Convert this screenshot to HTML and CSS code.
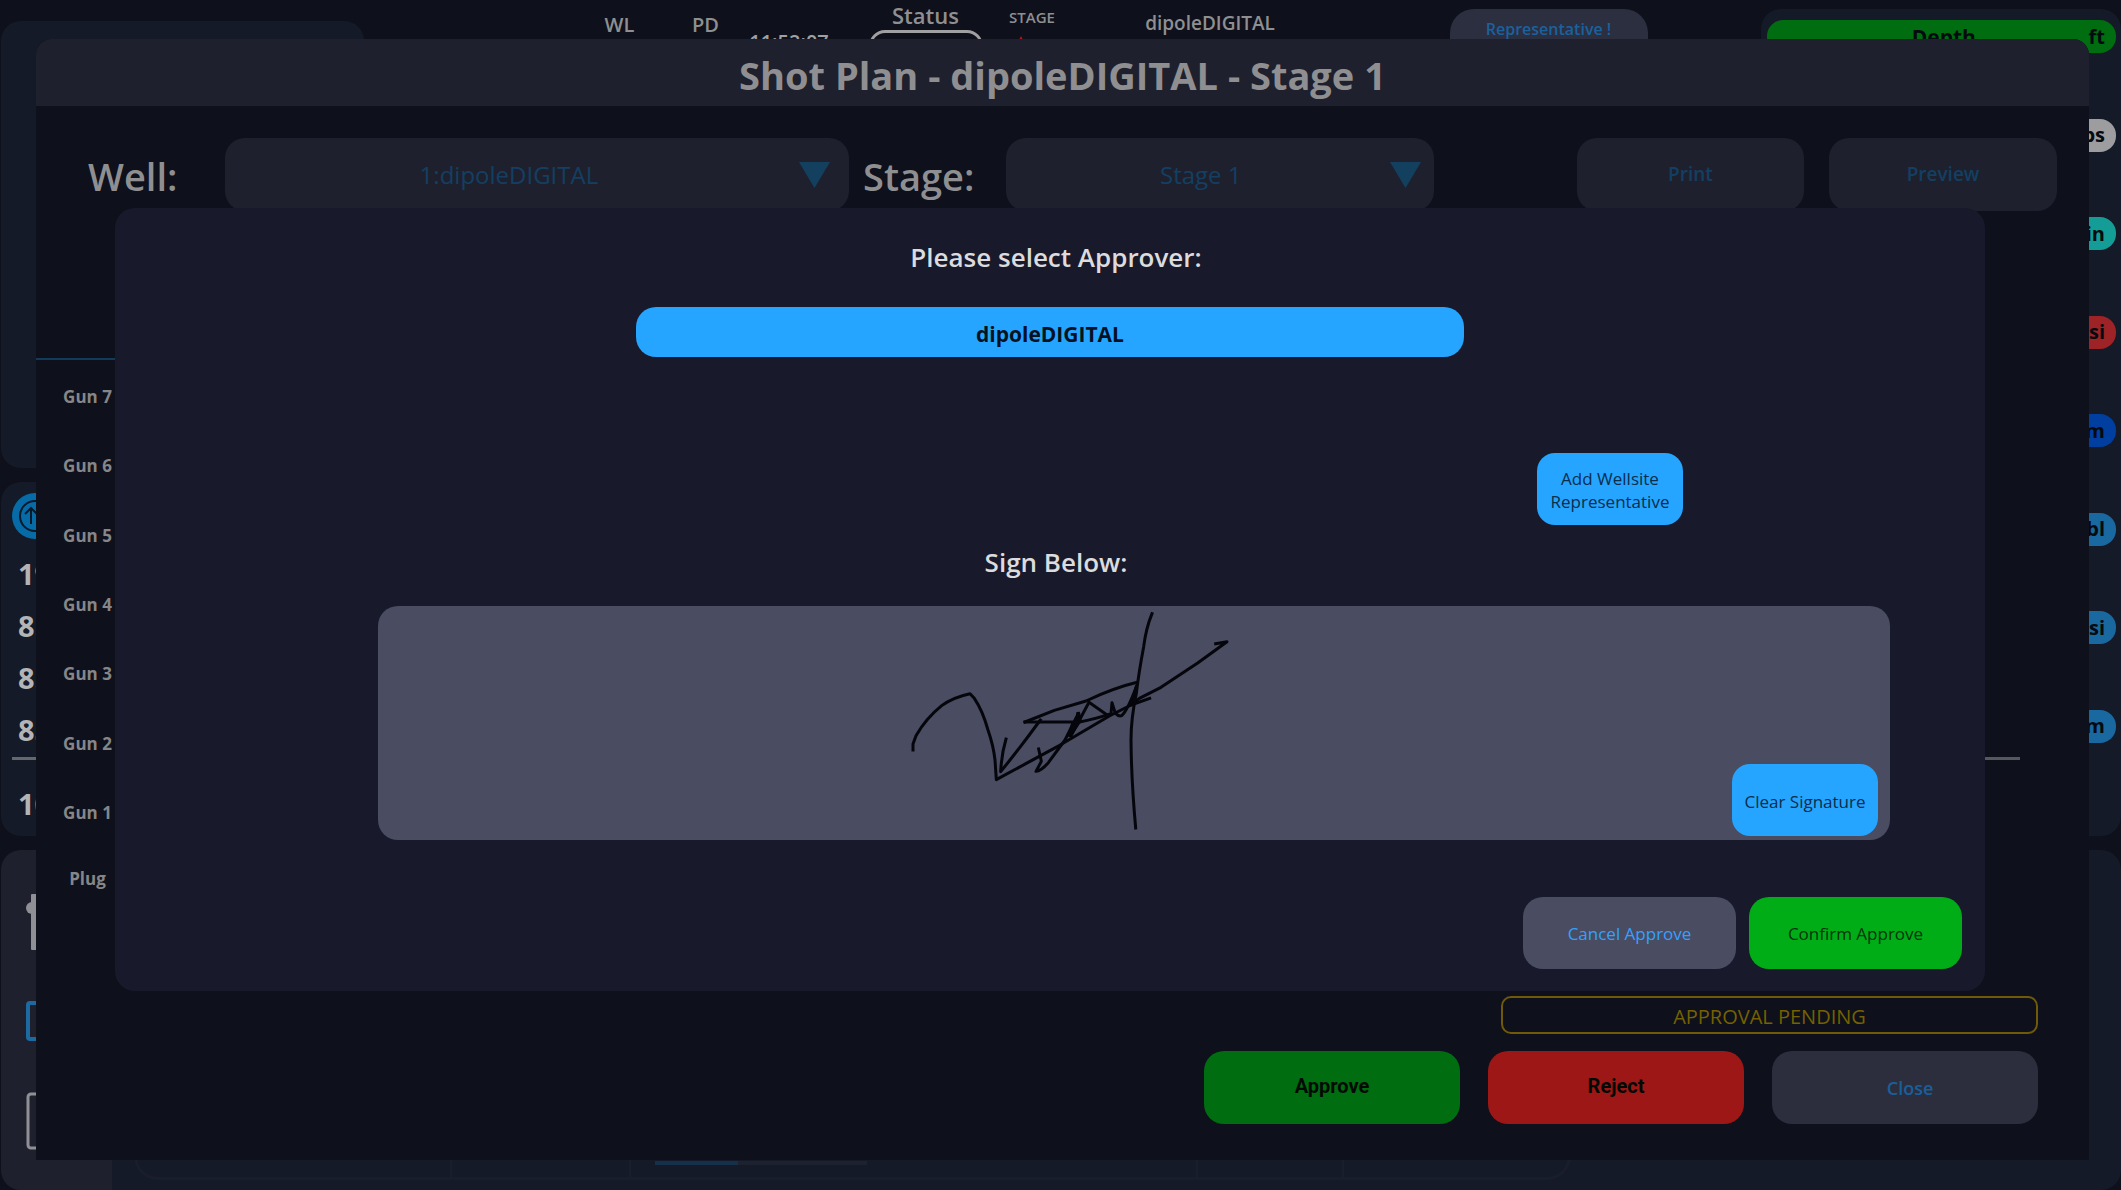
FILE: index.html
```html
<!DOCTYPE html>
<html lang="en">
<head>
<meta charset="utf-8">
<title>Shot Plan - dipoleDIGITAL - Stage 1</title>
<link rel="stylesheet" href="styles.css">
</head>
<body>
<main class="dashboard">
  <aside class="left">
    <section class="panel panel-map"></section>
    <section class="panel panel-depths">
      <svg class="sort-icon" viewBox="0 0 46 46" aria-hidden="true">
        <circle cx="23" cy="23" r="23" fill="#066ba6"/>
        <circle cx="23" cy="23" r="15" fill="none" stroke="#071a2b" stroke-width="2"/>
        <path d="M19 31V15M13 21l6-6 6 6M28 15v16" fill="none" stroke="#071a2b" stroke-width="2"/>
      </svg>
      <ul class="depths">
        <li>19</li>
        <li>8.5</li>
        <li>8.5</li>
        <li>85</li>
        <li class="total">10</li>
      </ul>
    </section>
  </aside>

  <header class="topbar">
    <span class="cell cell-wl">WL</span>
    <span class="cell cell-pd">PD</span>
    <time class="cell cell-time">11:52:07</time>
    <div class="cell cell-status">Status<span class="status-box"></span></div>
    <div class="cell cell-stage">STAGE<svg class="stage-mark" viewBox="0 0 12 12" aria-hidden="true"><path d="M6 0l6 12H0z" fill="#b01818"/></svg></div>
    <span class="cell cell-well">dipoleDIGITAL</span>
    <div class="cell cell-rep"><button class="rep" type="button">Representative !</button></div>
  </header>

  <aside class="panel gauges">
    <div class="gauge green"><span class="name">Depth</span><span>ft</span></div>
    <div class="gauge grey"><span>lbs</span></div>
    <div class="gauge teal"><span>ft/min</span></div>
    <div class="gauge red"><span>psi</span></div>
    <div class="gauge navy"><span>bpm</span></div>
    <div class="gauge blue"><span>bbl</span></div>
    <div class="gauge blue"><span>psi</span></div>
    <div class="gauge blue"><span>bpm</span></div>
  </aside>

  <section class="bottom">
    <nav class="rail">
      <svg viewBox="0 0 60 60" aria-hidden="true"><path d="M6 3v54h12V3z" fill="#8f9095" stroke="#8f9095" stroke-width="2" stroke-linejoin="round"/><circle cx="6" cy="16" r="6" fill="#8f9095"/></svg>
      <svg viewBox="0 0 60 40" aria-hidden="true"><rect x="2" y="2" width="56" height="36" rx="2" fill="none" stroke="#1d6aa3" stroke-width="4"/></svg>
      <svg viewBox="0 0 60 58" aria-hidden="true"><rect x="2" y="2" width="56" height="54" rx="3" fill="none" stroke="#8f9095" stroke-width="3"/></svg>
    </nav>
    <div class="grid-area">
      <div class="strip">
        <span></span><span></span><span class="with-bar"><i></i></span><span></span><span></span>
      </div>
    </div>
  </section>
</main>

<section class="plan-dialog" role="dialog" aria-labelledby="plan-title">
  <h1 class="plan-title" id="plan-title">Shot Plan - dipoleDIGITAL - Stage 1</h1>
  <form class="toolbar">
    <label for="well">Well:</label>
    <div class="picker">
      <select id="well"><option>1:dipoleDIGITAL</option></select>
      <svg viewBox="0 0 31 26" aria-hidden="true"><path d="M0 0h31L15.500 26z" fill="#14405f"/></svg>
    </div>
    <label class="stage-label" for="stage">Stage:</label>
    <div class="picker">
      <select id="stage"><option>Stage 1</option></select>
      <svg viewBox="0 0 31 26" aria-hidden="true"><path d="M0 0h31L15.500 26z" fill="#14405f"/></svg>
    </div>
    <button class="tool print" type="button">Print</button>
    <button class="tool preview" type="button">Preview</button>
  </form>

  <div class="chart">
    <div class="guns">
      <ul>
        <li>Gun 7</li><li>Gun 6</li><li>Gun 5</li><li>Gun 4</li><li>Gun 3</li><li>Gun 2</li><li>Gun 1</li>
      </ul>
      <p>Plug</p>
    </div>
    <div class="plot"></div>
  </div>

  <footer class="plan-footer">
    <p class="pending">APPROVAL PENDING</p>
    <div class="actions">
      <button class="action approve" type="button">Approve</button>
      <button class="action reject" type="button">Reject</button>
      <button class="action close" type="button">Close</button>
    </div>
  </footer>

  <section class="approve-modal" role="dialog" aria-labelledby="approver-title">
    <h2 id="approver-title">Please select Approver:</h2>
    <button class="approver" type="button">dipoleDIGITAL</button>
    <button class="small-btn add" type="button">Add Wellsite Representative</button>
    <h2 class="sign-title">Sign Below:</h2>
    <div class="pad">
      <svg class="ink" viewBox="0 48 1140 702" role="img" aria-label="Signature">
        <g fill="none" stroke="#05060c" stroke-width="9" stroke-linecap="square" stroke-linejoin="round">
          <path d="M96 480V462L105 437Q135 385 182 347Q215 322 267 311L280 325Q305 362 321 420Q337 466 342 510L346 569L440 518L536 466L685 378L750 345L806 325"/>
          <path d="M375 447Q362 490 359 545Q420 470 478 390"/>
          <path d="M473 477L481 514L465 544Q480 543 502 518L552 450L592 370L570 437L624 337L680 376"/>
          <path d="M575 405L566 436L596 392L592 372" stroke-width="12"/>
          <path d="M432 396L520 361L615 333Q700 293 769 277"/>
          <path d="M432 396H596Q640 388 690 371L693 338L703 370Q712 380 722 377Q740 360 766 290"/>
          <path d="M766 290L750 345L775 325L840 292L950 219L1038 155L1004 161"/>
          <path d="M813 71Q795 115 788 170Q773 250 766 310Q750 385 750 450Q751 570 764 714"/>
        </g>
      </svg>
      <button class="small-btn clear" type="button">Clear Signature</button>
    </div>
    <div class="modal-actions">
      <button class="confirm-btn cancel" type="button">Cancel Approve</button>
      <button class="confirm-btn confirm" type="button">Confirm Approve</button>
    </div>
  </section>
</section>
</body>
</html>
```
FILE: styles.css
```css
* { box-sizing: border-box; }
body {
  margin: 0;
  position: relative;
  background: #0e101b;
  color: #8f8f91;
  font-family: "Open Sans", "Noto Sans", sans-serif;
  font-weight: 600;
}
h1, h2, p, ul { margin: 0; padding: 0; list-style: none; font-weight: 600; }
button, select { font: inherit; color: inherit; border: 0; padding: 0; }
button { cursor: pointer; }

/* Dashboard behind the dialogs */
.dashboard {
  display: grid;
  grid-template-columns: 363px minmax(0, 1fr) 360px;
  grid-template-rows: minmax(836px, 1fr) 340px;
  row-gap: 14px;
  min-height: 100vh;
  padding-left: 1px;
  overflow: hidden;
}
.panel { background: #151a28; border-radius: 20px; }
.left { display: grid; grid-template-rows: 447fr 354fr; gap: 14px; padding-top: 21px; }
.panel-depths { padding: 11px 11px 0; }
.sort-icon { display: block; width: 46px; height: 46px; }
.depths { padding-top: 9px; font-size: 29px; font-weight: 700; line-height: 52px; color: #b4b4b6; }
.depths li { padding-left: 6px; }
.depths .total { border-top: 3px solid #66676c; padding-top: 18px; margin-top: 1px; }

.topbar {
  display: grid;
  grid-template-columns:
    minmax(0, 206fr) minmax(0, 99fr) minmax(0, 73fr) minmax(0, 94fr) minmax(0, 163fr)
    minmax(0, 66fr) minmax(0, 290fr) minmax(0, 387fr) minmax(0, 19fr);
  align-items: start;
  font-size: 20px;
  line-height: 30px;
  text-align: center;
}
.cell { display: block; }
.cell-wl { grid-column: 2; }
.cell-wl, .cell-pd { padding-top: 10px; }
.cell-time { padding-top: 27px; color: #a0a0a2; }
.cell-status { padding-left: 16px; font-size: 22px; }
.status-box { display: block; width: 114px; height: 50px; margin: 0 auto; border: 3px solid #a0a0a2; border-radius: 16px; }
.cell-stage { padding-top: 2px; font-size: 15px; }
.stage-mark { display: block; width: 12px; height: 12px; margin: 4px 0 0 16px; }
.cell-well { padding-top: 8px; font-size: 19px; }
.cell-rep { padding-top: 9px; }
.rep { width: 198px; height: 60px; padding: 10px 0 30px; border-radius: 24px; background: #2c2f3f; color: #1b619e; font-size: 16px; line-height: 20px; }

.gauges { display: flex; flex-direction: column; justify-content: space-between; margin-top: 9px; padding: 11px 5px 93px 6px; border-radius: 20px; color: #050a10; font-size: 20px; font-weight: 700; }
.gauge { display: flex; align-items: center; justify-content: flex-end; height: 33px; padding-right: 11px; border-radius: 16px; line-height: 28px; }
.gauge .name { flex: 1; padding-left: 32px; font-size: 21px; text-align: center; }
.green { background: #006d10; }
.grey { background: #9d9d9f; }
.teal { background: #149d96; }
.red { background: #9d2326; }
.navy { background: #003f9f; }
.blue { background: #1968a0; }

.bottom { grid-column: 1 / -1; display: flex; }
.rail { display: flex; flex-direction: column; width: 111px; padding: 42px 25px 0; background: #1e202e; border-radius: 20px 0 0 20px; }
.rail svg { display: block; width: 60px; }
.rail svg:nth-child(2) { margin-top: 49px; }
.rail svg:nth-child(3) { margin-top: 51px; }
.grid-area { flex: 1; display: flex; align-items: flex-end; padding: 0 550px 10px 22px; background: #151a28; border-radius: 0 20px 20px 0; }
.strip { flex: 1; display: grid; grid-template-columns: 314fr 179fr 568fr 147fr 226fr; height: 120px; border: 3px solid #1a1d2c; border-radius: 24px; }
.strip span + span { border-left: 2px solid #1a1d2c; }
.with-bar { display: flex; align-items: flex-end; padding: 0 0 12px 24px; }
.with-bar i { width: 212px; height: 4px; background: linear-gradient(90deg, #15304a 39%, #1e2230 39%); }

/* Shot plan dialog */
.plan-dialog {
  position: absolute;
  inset: 39px 32px 30px 36px;
  display: flex;
  flex-direction: column;
  background: #0e101b;
  border-radius: 16px 16px 0 0;
}
.plan-title { height: 67px; border-radius: 16px 16px 0 0; background: #1e202e; font-size: 38px; font-weight: 700; line-height: 72px; text-align: center; }
.toolbar {
  display: grid;
  grid-template-columns: 137px 624fr 157px 428fr 143fr 227fr 25fr 228fr;
  padding: 32px 32px 0 52px;
}
.toolbar label { font-size: 38px; line-height: 76px; height: 73px; }
.toolbar .stage-label { padding-left: 14px; }
.picker { display: grid; color: #143f62; }
.picker select {
  grid-area: 1 / 1;
  width: 100%;
  height: 73px;
  padding-right: 9%;
  appearance: none;
  background: #1e212d;
  border-radius: 20px;
  font-size: 24px;
  font-weight: 400;
  text-align: center;
  text-align-last: center;
}
.picker svg { grid-area: 1 / 1; justify-self: end; align-self: center; width: 31px; height: 26px; margin-right: 3%; pointer-events: none; }
.tool { height: 73px; padding-bottom: 2px; border-radius: 20px; background: #1e212d; color: #143f62; font-size: 19px; line-height: 28px; }
.print { grid-column: 6; }
.preview { grid-column: 8; }

.chart { display: flex; padding: 147px 69px 0 0; align-items: flex-start; }
.guns { width: 103px; border-top: 2px solid #123a5a; color: #868688; font-size: 17px; font-weight: 700; text-align: center; }
.guns ul { display: flex; flex-direction: column; height: 487px; padding-top: 2px; }
.guns li { flex: 1; display: flex; align-items: center; justify-content: center; font-weight: 700; }
.guns p { line-height: 64px; font-weight: 700; }
.plot { flex: 1; height: 402px; border-bottom: 3px solid #57585d; }

.plan-footer { display: flex; flex-direction: column; align-items: flex-end; gap: 17px; margin-top: auto; padding: 0 51px 36px; }
.pending { width: 537px; height: 38px; border: 2px solid #6e5a08; border-radius: 10px; color: #756100; font-size: 20px; font-weight: 400; line-height: 38px; text-align: center; }
.actions { display: flex; gap: 28px; }
.action { width: 256px; height: 73px; padding-bottom: 4px; border-radius: 20px; color: #020a04; font-family: Roboto, "Open Sans", sans-serif; font-size: 20px; font-weight: 700; }
.approve { background: #006d10; }
.reject { background: #9d1717; }
.action.close { width: 266px; padding: 0 0 0 10px; background: #2c2e3d; color: #17609c; font-family: inherit; font-size: 18px; font-weight: 600; }

/* Approval modal */
.approve-modal {
  position: absolute;
  inset: 169px 104px 169px 79px;
  display: flex;
  flex-direction: column;
  align-items: center;
  padding: 30px 23px 22px;
  border-radius: 20px;
  background: #181a2c;
}
.approve-modal h2 { padding-left: 12px; color: #dcdcde; font-size: 26px; line-height: 38px; }
.approver { width: 828px; height: 50px; margin-top: 31px; padding-top: 4px; border-radius: 20px; background: #25a5ff; color: #04121f; font-size: 21px; font-weight: 700; }
.small-btn { width: 146px; height: 72px; padding: 2px 10px 0; border-radius: 18px; background: #25a5ff; color: #0a2d4c; font-size: 17px; font-weight: 500; line-height: 23px; }
.add { align-self: flex-end; margin: 96px 279px 18px 0; }
.pad {
  align-self: stretch;
  display: grid;
  grid-template-columns: 503fr 380px 630fr;
  height: 234px;
  margin: 25px 72px 57px 240px;
  border-radius: 20px;
  background: #4a4c61;
}
.ink { grid-column: 2; width: 380px; height: 234px; }
.pad .clear { align-self: end; justify-self: end; margin: 0 12px 4px 0; padding: 2px 0 0; }
.modal-actions { display: flex; gap: 13px; align-self: flex-end; margin-top: auto; }
.confirm-btn { width: 213px; height: 72px; border-radius: 20px; font-size: 17px; font-weight: 500; }
.cancel { background: #4a4c61; color: #35a0ff; }
.confirm { background: #00ad17; color: #033309; }
```
